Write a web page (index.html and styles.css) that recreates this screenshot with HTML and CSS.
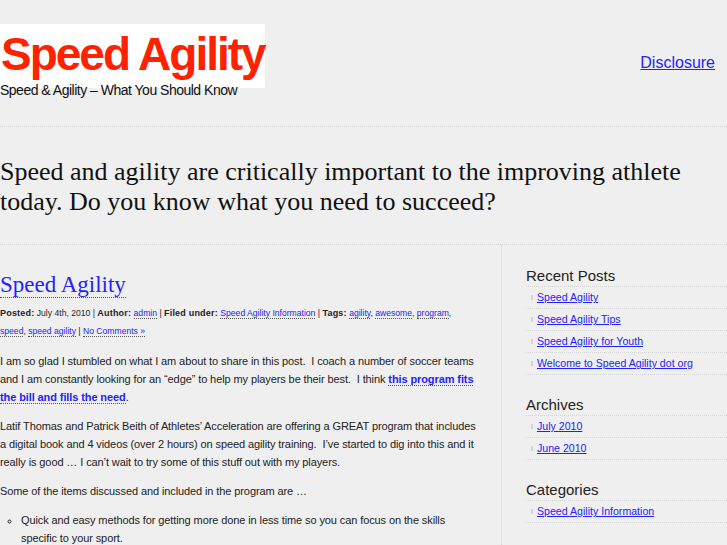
FILE: index.html
```html
<!DOCTYPE html>
<html lang="en">
	<head>
		<meta charset="utf-8">
		<title>Speed Agility</title>
		<link rel="stylesheet" href="styles.css">
	</head>
	<body>
		<header id="header">
			<div class="branding">
				<h1 class="logo"><a href="#">Speed Agility</a></h1>
				<p class="tagline">Speed &amp; Agility &ndash; What You Should Know</p>
			</div>
			<nav class="pages">
				<a href="#">Disclosure</a>
			</nav>
		</header>

		<section class="intro">
			<p>Speed and agility are critically important to the improving athlete today. Do you know what you need to succeed?</p>
		</section>

		<div id="wrap">
			<main id="main">
				<article class="post">
					<h2 class="post-title"><a href="#">Speed Agility</a></h2>
					<p class="meta">
						<b>Posted:</b> July 4th, 2010 | <b>Author:</b> <a href="#">admin</a> | <b>Filed under:</b> <a href="#">Speed Agility Information</a> | <b>Tags:</b> <a href="#">agility</a>, <a href="#">awesome</a>, <a href="#">program</a>, <a href="#">speed</a>, <a href="#">speed agility</a> | <a href="#">No Comments &raquo;</a>
					</p>
					<div class="entry">
						<p>I am so glad I stumbled on what I am about to share in this post.&nbsp; I coach a number of soccer teams and I am constantly looking for an &ldquo;edge&rdquo; to help my players be their best.&nbsp; I think <a href="#">this program fits the bill and fills the need</a>.</p>
						<p>Latif Thomas and Patrick Beith of Athletes&rsquo; Acceleration are offering a GREAT program that includes a digital book and 4 videos (over 2 hours) on speed agility training.&nbsp; I&rsquo;ve started to dig into this and it really is good &hellip; I can&rsquo;t wait to try some of this stuff out with my players.</p>
						<p>Some of the items discussed and included in the program are &hellip;</p>
						<ul>
							<li>Quick and easy methods for getting more done in less time so you can focus on the skills specific to your sport.</li>
							<li>Drills that build reaction time, footwork and change of direction for athletes of every level.</li>
						</ul>
					</div>
				</article>
			</main>

			<aside id="sidebar">
				<div class="widget">
					<h3>Recent Posts</h3>
					<ul>
						<li><a href="#">Speed Agility</a></li>
						<li><a href="#">Speed Agility Tips</a></li>
						<li><a href="#">Speed Agility for Youth</a></li>
						<li><a href="#">Welcome to Speed Agility dot org</a></li>
					</ul>
				</div>
				<div class="widget">
					<h3>Archives</h3>
					<ul>
						<li><a href="#">July 2010</a></li>
						<li><a href="#">June 2010</a></li>
					</ul>
				</div>
				<div class="widget">
					<h3>Categories</h3>
					<ul>
						<li><a href="#">Speed Agility Information</a></li>
					</ul>
				</div>
			</aside>
		</div>
	</body>
</html>
```

FILE: styles.css
```css
body {
	margin: 0;
	background: #efefef;
	color: #222;
	font-family: "Liberation Sans", Arial, sans-serif;
	font-size: 11px;
	overflow: hidden;
}
a {
	color: #2222ff;
}

/* header */
#header {
	display: flex;
	justify-content: space-between;
	height: 126px;
	border-bottom: 1px dotted #d6d6d6;
}
.branding {
	padding-top: 24px;
}
.logo {
	margin: 0;
	box-sizing: border-box;
	width: 265px;
	height: 64px;
	padding: 7px 0 0 1px;
	background: #fff;
	font-size: 46px;
	font-weight: bold;
	letter-spacing: -2px;
	line-height: 46px;
	white-space: nowrap;
}
.logo a {
	color: #ff2200;
	text-decoration: none;
}
.tagline {
	margin: -6px 0 0;
	font-size: 14px;
	letter-spacing: -0.5px;
	color: #111;
}
.pages {
	padding: 54px 12px 0 0;
	font-size: 16px;
}

/* intro */
.intro {
	height: 117px;
	border-bottom: 1px dotted #d6d6d6;
}
.intro p {
	margin: 0;
	padding-top: 30px;
	width: 700px;
	font-family: "Liberation Serif", "Times New Roman", serif;
	font-size: 26px;
	line-height: 30px;
	color: #111;
}

/* two columns */
#wrap {
	display: flex;
}
#main {
	width: 478px;
	padding-right: 23px;
	border-right: 1px dotted #d6d6d6;
}
#sidebar {
	flex: 1;
	padding-left: 24px;
	padding-top: 22px;
}

/* post */
.post-title {
	margin: 25px 0 0;
	font-family: "Liberation Serif", "Times New Roman", serif;
	font-size: 23px;
	font-weight: normal;
	line-height: 30px;
}
.post-title a,
.meta a,
.entry a {
	text-decoration: none;
	border-bottom: 1px dotted #555;
}
.meta {
	margin: 4px 0 0;
	font-size: 8.6px;
	line-height: 18px;
	color: #222;
}
.meta b {
	font-size: 9px;
	letter-spacing: 0.2px;
}
.entry {
	margin-top: 12px;
	letter-spacing: -0.1px;
}
.entry p {
	margin: 0 0 11px;
	line-height: 18px;
}
.entry a {
	font-weight: bold;
}
.entry ul {
	margin: 0;
	padding-left: 21px;
	list-style: circle;
	line-height: 18px;
}

/* sidebar widgets */
.widget h3 {
	margin: 0;
	padding-bottom: 2px;
	font-size: 15px;
	font-weight: normal;
	color: #222;
	border-bottom: 1px dotted #d6d6d6;
}
.widget ul {
	margin: 0 0 21px;
	padding: 0;
	list-style: none;
}
.widget li {
	position: relative;
	padding: 4px 0 4px 11px;
	font-size: 10.6px;
	line-height: 13px;
	border-bottom: 1px dotted #d6d6d6;
}
.widget li::before {
	content: "";
	position: absolute;
	left: 5px;
	top: 8px;
	width: 2px;
	height: 5px;
	background: #d4d4d4;
}
```
